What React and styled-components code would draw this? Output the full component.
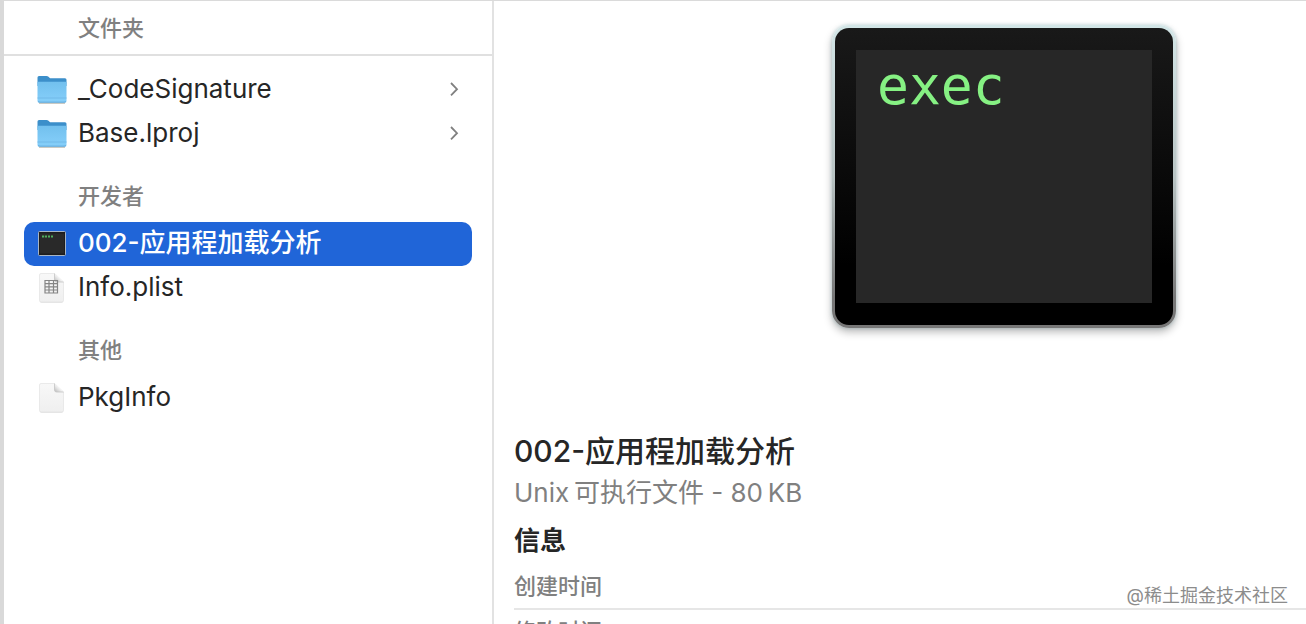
import React from "react";
import styled, { createGlobalStyle } from "styled-components";

const GlobalStyle = createGlobalStyle`
  *, *::before, *::after { box-sizing: border-box; }
  body {
    margin: 0;
    overflow: hidden;
    background: #fff;
    color: #262626;
    font-family: Inter, "Noto Sans CJK SC", sans-serif;
  }
`;

const Window = styled.div`
  position: relative;
  display: flex;
  height: 100vh;
  overflow: hidden;
  border-top: 1px solid #dadada;
  border-left: 4px solid #d9d9d9;
`;

const Column = styled.nav`
  flex: none;
  width: 490px;
  border-right: 2px solid #e2e2e2;
`;

const ColumnHeader = styled.h2`
  margin: 0 0 12px;
  padding: 11px 0 10px 74px;
  border-bottom: 2px solid #e0e0e0;
  font-size: 22px;
  line-height: 32px;
  font-weight: 500;
  color: #808080;
`;

const GroupHeader = styled.h2`
  margin: 0;
  padding: 24px 0 10px 74px;
  font-size: 22px;
  line-height: 32px;
  font-weight: 500;
  color: #808080;
`;

const List = styled.ul`
  margin: 0;
  padding: 0 20px;
  list-style: none;
`;

const Row = styled.button`
  display: flex;
  align-items: center;
  gap: 10px;
  width: 100%;
  height: 44px;
  padding: 0 12px;
  border: 0;
  border-radius: 10px;
  background: ${(p) => (p.$selected ? "#2065d8" : "transparent")};
  color: ${(p) => (p.$selected ? "#fff" : "#262626")};
  font-family: inherit;
  font-size: 26px;
  line-height: 40px;
  text-align: left;
  font-weight: ${(p) => (p.$selected ? 500 : 400)};
`;

const RowLabel = styled.span`
  flex: 1;
  padding-bottom: 2px;
`;

const Icon = styled.svg`
  flex: none;
  display: block;
`;

const Details = styled.main`
  flex: 1;
  min-width: 0;
  padding-left: 20px;
`;

const Preview = styled.div`
  display: flex;
  justify-content: flex-end;
  padding: 24px 130px 101px 0;
`;

const Bezel = styled.div`
  padding: 3px;
  border-radius: 17px;
  background: linear-gradient(#d3e6e7, #b9c4c4 50%, #777 90%, #777);
  box-shadow: 0 4px 8px rgba(0, 0, 0, 0.28), 0 0 3px 1px rgba(160, 200, 205, 0.35);
`;

const Frame = styled.div`
  padding: 22px 21px;
  border-radius: 14px;
  background: linear-gradient(#191919, #000 80%);
`;

const Screen = styled.div`
  width: 296px;
  height: 253px;
  padding: 4px 21px;
  background: #272727;
  color: #86f183;
  font-family: "DejaVu Sans Mono", monospace;
  font-size: 53px;
  line-height: 64px;
`;

const FileName = styled.h1`
  margin: 0;
  font-size: 30px;
  line-height: 44px;
  font-weight: 500;
`;

const FileKind = styled.p`
  margin: 0;
  font-size: 26px;
  line-height: 40px;
  color: #808080;
`;

const SectionTitle = styled.h2`
  margin: 8px 0 0;
  font-size: 26px;
  line-height: 40px;
  font-weight: 700;
`;

const InfoList = styled.ul`
  margin: 4px 0 0;
  padding: 0;
  list-style: none;
`;

const InfoRow = styled.li`
  padding: 5px 0 6px;
  border-bottom: 2px solid #e6e6e6;
  font-size: 22px;
  line-height: 32px;
  font-weight: 500;
  color: #808080;
`;

const Watermark = styled.span`
  position: absolute;
  right: 18px;
  bottom: 15px;
  font-size: 18px;
  line-height: 26px;
  font-weight: 400;
  color: #8c8c8c;
  text-shadow: 0 0 2px #fff, 1px 1px 0 #fff;
`;

const FolderIcon = () => (
  <Icon width="32" height="32" viewBox="0 0 32 32" aria-hidden="true">
    <defs>
      <linearGradient id="folder" x1="0" y1="0" x2="0" y2="1">
        <stop offset="0" stopColor="#72c0ee" />
        <stop offset="1" stopColor="#86cffa" />
      </linearGradient>
    </defs>
    <path d="M3 29.200h26" stroke="#c4c4bd" strokeWidth="1.400" />
    <path d="M1.500 3.500Q1.500 2 3 2h7.500q1.200 0 2 .8l1 .9q.5.500 1.500.500H29q1.500 0 1.500 1.500V12h-29z" fill="#3c8fca" />
    <path d="M1.500 8.500q0-.8 1-.8h27q1 0 1 .8v18.500q0 1.500-1.500 1.500H3q-1.500 0-1.500-1.500z" fill="url(#folder)" />
    <path d="M1.500 24h29" stroke="#70b9e8" strokeWidth="1" />
    <path d="M2 27.400Q2.500 28.200 4 28.200h24q1.500 0 2-.8" fill="none" stroke="#5aa5d9" strokeWidth="1" />
  </Icon>
);

const ExecIcon = () => (
  <Icon width="32" height="32" viewBox="0 0 32 32" aria-hidden="true">
    <rect x="2.500" y="3.500" width="27" height="24" rx="1" fill="#1d1d1d" stroke="#a6b4c4" />
    <rect x="4" y="5.500" width="24" height="20" fill="#292929" />
    <path d="M6 8.500h2.200M9 8.500h2M12 8.500h2M15 8.500h2" stroke="#4fae5c" strokeWidth="2" />
  </Icon>
);

const DocumentIcon = ({ table }) => (
  <Icon width="32" height="32" viewBox="0 0 32 32" aria-hidden="true">
    <defs>
      <linearGradient id="paper" x1="0" y1="0" x2="0" y2="1">
        <stop offset="0" stopColor="#f8f8f8" />
        <stop offset="1" stopColor="#efefef" />
      </linearGradient>
      <linearGradient id="fold" x1="0" y1="1" x2="1" y2="0">
        <stop offset="0" stopColor="#b8b8b8" />
        <stop offset=".5" stopColor="#f4f4f4" />
      </linearGradient>
    </defs>
    <path d="M4 2.500h14.500l8.500 8V29q0 1.500-1.500 1.500h-20Q4 30.500 4 29z" fill="#cfcfcf" />
    <path d="M3.500 3q0-1.500 1.500-1.500h13.500L27.500 10v18.500q0 1.500-1.500 1.500H5q-1.500 0-1.500-1.500z" fill="url(#paper)" stroke="#e2e2e2" strokeWidth=".7" />
    <path d="M18.500 1.500V8q0 2 2 2h7z" fill="url(#fold)" />
    <path d="M18.500 1.500V8q0 2 2 2h7" fill="none" stroke="#c4c4c4" strokeWidth=".8" />
    {table && (
      <path
        d="M9 8.500h12.500v12.500H9zM9 11.600h12.500M9 14.800h12.500M9 18h12.500M13 8.500v12.500M17.500 8.500v12.500"
        fill="none"
        stroke="#858585"
        strokeWidth="1.200"
      />
    )}
  </Icon>
);

const Chevron = () => (
  <Icon width="12" height="18" viewBox="0 0 12 18" aria-hidden="true">
    <path d="M3 2l6 6.200-6 6.200" fill="none" stroke="#808080" strokeWidth="1.800" />
  </Icon>
);

function FileRow({ icon, label, folder, selected }) {
  return (
    <li>
      <Row type="button" $selected={selected} aria-current={selected ? "true" : undefined}>
        {icon}
        <RowLabel>{label}</RowLabel>
        {folder && <Chevron />}
      </Row>
    </li>
  );
}

export default function App() {
  return (
    <>
      <GlobalStyle />
      <Window>
        <Column>
          <ColumnHeader>文件夹</ColumnHeader>
          <List>
            <FileRow icon={<FolderIcon />} label="_CodeSignature" folder />
            <FileRow icon={<FolderIcon />} label="Base.lproj" folder />
          </List>
          <GroupHeader>开发者</GroupHeader>
          <List>
            <FileRow icon={<ExecIcon />} label="002-应用程加载分析" selected />
            <FileRow icon={<DocumentIcon table />} label="Info.plist" />
          </List>
          <GroupHeader>其他</GroupHeader>
          <List>
            <FileRow icon={<DocumentIcon />} label="PkgInfo" />
          </List>
        </Column>
        <Details>
          <Preview>
            <Bezel>
              <Frame>
                <Screen>exec</Screen>
              </Frame>
            </Bezel>
          </Preview>
          <FileName>002-应用程加载分析</FileName>
          <FileKind>Unix{"\u2009"}可执行文件 - 80{"\u2009"}KB</FileKind>
          <SectionTitle>信息</SectionTitle>
          <InfoList>
            <InfoRow>创建时间</InfoRow>
            <InfoRow>修改时间</InfoRow>
          </InfoList>
        </Details>
        <Watermark>@稀土掘金技术社区</Watermark>
      </Window>
    </>
  );
}
